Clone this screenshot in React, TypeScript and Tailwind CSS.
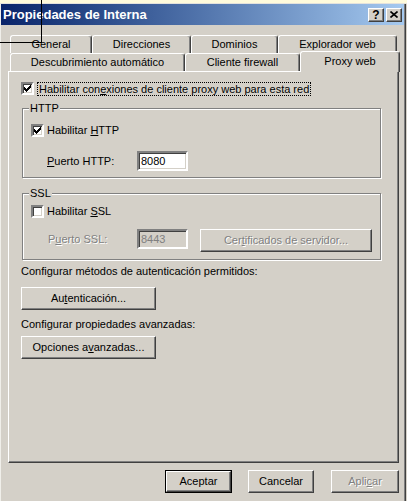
import React from "react"

const raised =
    "border border-t-white border-l-white border-r-[#404040] border-b-[#404040] shadow-[inset_-1px_-1px_0_#808080]"
const sunken =
    "border-2 border-t-[#808080] border-l-[#808080] border-r-white border-b-white shadow-[inset_1px_1px_0_#404040,inset_-1px_-1px_0_#d4d0c8]"
const disabledText = "text-[#808080] [text-shadow:1px_1px_0_#ffffff]"

const CHECK = [
    "......X",
    ".....XX",
    "X...XXX",
    "XX.XXX.",
    "XXXXX..",
    ".XXX...",
    "..X....",
]

const CheckBox = ({ checked }: { checked?: boolean }) => (
    <span className={`w-[13px] h-[13px] bg-white flex items-center justify-center shrink-0 ${sunken}`}>
        {checked && (
            <svg width="7" height="7" viewBox="0 0 7 7" shapeRendering="crispEdges">
                {CHECK.flatMap((row, y) =>
                    row.split("").map((c, x) =>
                        c === "X" ? <rect key={`${x}-${y}`} x={x} y={y} width="1" height="1" fill="#000" /> : null
                    )
                )}
            </svg>
        )}
    </span>
)

const Tab = ({ label, width, active }: { label: string; width: string; active?: boolean }) => (
    <div
        className={`${width} ${active ? "h-[21px] -mb-[1px] z-20 pb-[2px]" : "h-full"} bg-[#d4d0c8] border-l border-t border-white border-r border-r-[#404040] shadow-[inset_-1px_0_0_#808080] rounded-t-[3px] flex items-center justify-center`}
    >
        {label}
    </div>
)

const GroupBox = ({ title, height, children }: { title: string; height: string; children: React.ReactNode }) => (
    <div className={`relative w-[359px] ${height} ml-[1px] border border-[#808080] shadow-[inset_1px_1px_0_#ffffff,1px_1px_0_#ffffff]`}>
        <span className="absolute -top-[7px] left-[6px] px-px bg-[#d4d0c8] leading-[13px]">{title}</span>
        {children}
    </div>
)

const Button = ({ children, width, disabled, isDefault }: { children: React.ReactNode; width: string; disabled?: boolean; isDefault?: boolean }) => (
    <div className={`${width} h-[23px] ${isDefault ? "border border-black" : ""}`}>
        <div className={`w-full h-full ${raised} flex items-center justify-center ${disabled ? disabledText : ""}`}>
            {children}
        </div>
    </div>
)

export default function App() {
    return (
        <div className="relative w-[407px] h-[501px] overflow-hidden bg-[#d4d0c8] text-black text-[11px] leading-[13px] font-['Liberation_Sans',Arial,sans-serif]">
            <div className="h-[3px] bg-[#fffbdc]" />
            <div className="h-px bg-[#e4e2dc]" />
            <div className="w-[406px] h-[497px] border-l border-l-[#f0efea] border-r border-r-[#404040] shadow-[inset_-1px_0_0_#808080]">
                {/* title bar */}
                <div className="w-[403px] h-[21px] bg-linear-to-r from-[#0a246a] to-[#a6caf0] flex items-center pl-[2px] pr-[2px]">
                    <span className="text-white font-bold text-[13px] flex-1">Propiedades de Interna</span>
                    <div className={`w-[16px] h-[14px] bg-[#d4d0c8] ${raised} flex items-center justify-center font-bold text-[12px] leading-none`}>?</div>
                    <div className={`w-[16px] h-[14px] ml-[2px] bg-[#d4d0c8] ${raised} flex items-center justify-center`}>
                        <svg width="8" height="7" viewBox="0 0 8 7">
                            <path d="M0.5 0.5 L7.5 6.5 M7.5 0.5 L0.5 6.5" stroke="#000" strokeWidth="1.6" />
                        </svg>
                    </div>
                </div>

                {/* tabs */}
                <div className="mt-[10px] ml-[9px] flex h-[18px]">
                    <Tab label="General" width="w-[82px]" />
                    <Tab label="Direcciones" width="w-[99px]" />
                    <Tab label="Dominios" width="w-[87px]" />
                    <Tab label="Explorador web" width="w-[119px]" />
                </div>
                <div className="ml-[9px] flex items-end h-[18px] relative z-10">
                    <Tab label="Descubrimiento automático" width="w-[175px]" />
                    <Tab label="Cliente firewall" width="w-[115px]" />
                    <Tab label="Proxy web" width="w-[100px]" active />
                </div>

                {/* panel */}
                <div className="ml-[7px] w-[391px] h-[392px] border border-t-white border-l-white border-r-[#404040] border-b-[#404040] shadow-[inset_-1px_-1px_0_#808080] flex flex-col pl-[12px]">
                    <div className="mt-[10px] flex items-center h-[13px]">
                        <CheckBox checked />
                        <span className="ml-[3px] px-px border border-dotted border-black leading-[12px]">
                            Habilitar con<u>e</u>xiones de cliente proxy web para esta red
                        </span>
                    </div>

                    <div className="mt-[13px]">
                        <GroupBox title="HTTP" height="h-[70px]">
                            <div className="pl-[8px] pt-[15px] flex items-center">
                                <CheckBox checked />
                                <span className="ml-[3px]">Habilitar <u>H</u>TTP</span>
                            </div>
                            <div className="mt-[14px] pl-[24px] flex items-center">
                                <span className="w-[90px]"><u>P</u>uerto HTTP:</span>
                                <div className={`w-[51px] h-[20px] bg-white ${sunken} flex items-center pl-[2px]`}>8080</div>
                            </div>
                        </GroupBox>
                    </div>

                    <div className="mt-[15px]">
                        <GroupBox title="SSL" height="h-[67px]">
                            <div className="pl-[8px] pt-[11px] flex items-center">
                                <CheckBox />
                                <span className="ml-[3px]">Habilitar <u>S</u>SL</span>
                            </div>
                            <div className="mt-[11px] pl-[25px] flex items-start">
                                <span className={`w-[89px] h-[20px] flex items-center ${disabledText}`}>P<u>u</u>erto SSL:</span>
                                <div className={`w-[51px] h-[20px] ${sunken} flex items-center pl-[2px] text-[#808080]`}>8443</div>
                                <div className="ml-[12px]">
                                    <Button width="w-[172px]" disabled>
                                        Cer<u>t</u>ificados de servidor...
                                    </Button>
                                </div>
                            </div>
                        </GroupBox>
                    </div>

                    <p className="mt-[5px]">Configurar métodos de autenticación permitidos:</p>
                    <div className="mt-[9px]">
                        <Button width="w-[135px]">
                            Au<u>t</u>enticación...
                        </Button>
                    </div>
                    <p className="mt-[8px]">Configurar propiedades avanzadas:</p>
                    <div className="mt-[5px]">
                        <Button width="w-[135px]">
                            Opciones a<u>v</u>anzadas...
                        </Button>
                    </div>
                </div>

                {/* dialog buttons */}
                <div className="mt-[7px] flex">
                    <div className="ml-[164px]">
                        <Button width="w-[67px]" isDefault>Aceptar</Button>
                    </div>
                    <div className="ml-[16px]">
                        <Button width="w-[66px]">Cancelar</Button>
                    </div>
                    <div className="ml-[17px]">
                        <Button width="w-[68px]" disabled>
                            Apli<u>c</u>ar
                        </Button>
                    </div>
                </div>
            </div>

            {/* selection marquee in the capture */}
            <div className="absolute left-0 top-0 w-[42px] h-[43px] border-r border-b border-black pointer-events-none z-50" />
        </div>
    )
}
